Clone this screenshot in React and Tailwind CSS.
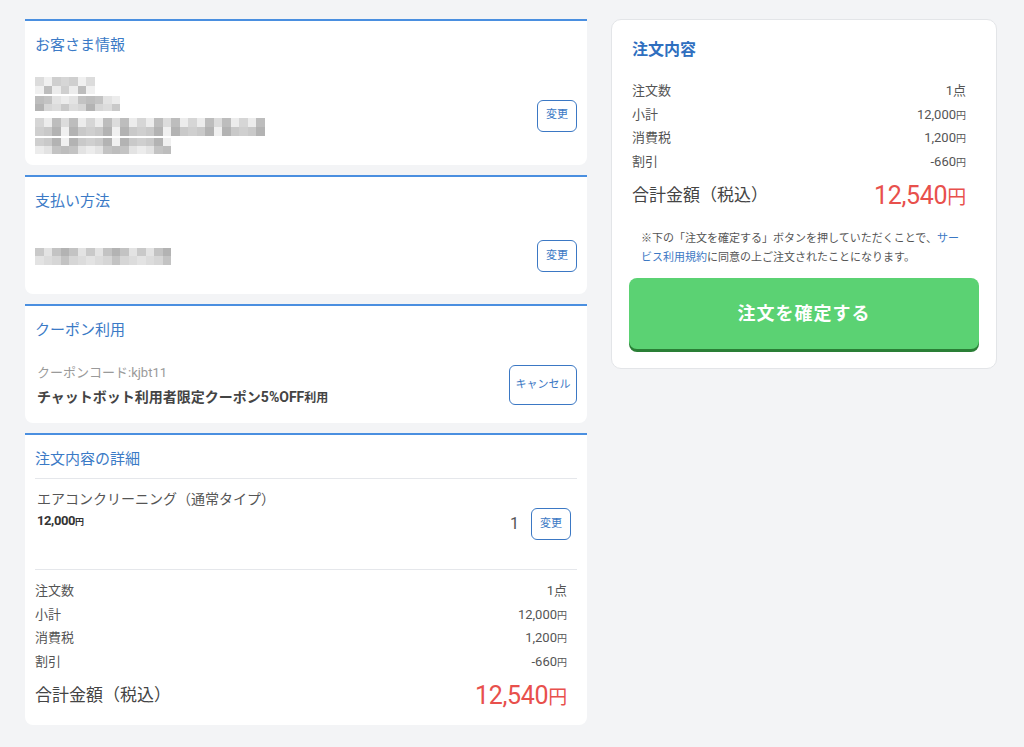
import React from 'react';

const FONT = { fontFamily: 'Roboto, "Noto Sans CJK JP", "Noto Sans", sans-serif' };

// Pixelated stand-in for the blurred personal info
const GRAYS = ['#c9c9c9', '#d6d6d6', '#bdbdbd', '#e3e3e3', '#cfcfcf', '#b3b3b3', '#dcdcdc', '#ececec', '#c3c3c3', '#f0f0f0'];
function Mosaic({ width, rows = 2, seed = 1, light = false, h = 8.5 }) {
  const cell = 8.5;
  const cols = Math.round(width / cell);
  const out = [];
  for (let r = 0; r < rows; r++) {
    const row = [];
    for (let c = 0; c < cols; c++) {
      const i = (seed * 7 + r * 13 + c * 5 + ((c * c + seed) % 3)) % GRAYS.length;
      const col = light ? GRAYS[(i + 3) % GRAYS.length] : GRAYS[i];
      row.push(<div key={c} style={{ background: col, width: cell, height: h }} />);
    }
    out.push(<div key={r} className="flex">{row}</div>);
  }
  return <div className="flex flex-col">{out}</div>;
}

function SmallBtn({ children, className = '' }) {
  return (
    <button className={`h-[32px] w-[40px] rounded-[6px] border border-[#3b78c4] bg-white text-[11px] text-[#3b78c4] ${className}`}>
      {children}
    </button>
  );
}

function Section({ title, children, className = '' }) {
  return (
    <section className={`rounded-b-[8px] border-t-2 border-[#4a8fe0] bg-white px-[10px] ${className}`}>
      <h2 className="pt-[13px] text-[15px] leading-[22px] text-[#3b7ac6]">{title}</h2>
      {children}
    </section>
  );
}

function Yen({ v, cls = 'text-[13px]', yen = 'text-[10px]' }) {
  return (
    <span className={cls}>
      {v}
      <span className={yen}>円</span>
    </span>
  );
}

function SummaryRows() {
  const rows = [
    ['注文数', <span className="text-[13px]">1点</span>],
    ['小計', <Yen v="12,000" />],
    ['消費税', <Yen v="1,200" />],
    ['割引', <Yen v="-660" />],
  ];
  return (
    <div className="flex flex-col text-[#555]">
      {rows.map(([l, r]) => (
        <div key={l} className="flex h-[23.7px] items-center justify-between">
          <span className="text-[13px]">{l}</span>
          {r}
        </div>
      ))}
    </div>
  );
}

function Total() {
  return (
    <div className="flex items-center justify-between">
      <span className="text-[17px] text-[#444]">合計金額（税込）</span>
      <span className="text-[25px] tracking-[-0.3px] text-[#e8504c]">
        12,540<span className="text-[19px]">円</span>
      </span>
    </div>
  );
}

export default function App() {
  return (
    <div className="min-h-[747px] bg-[#f3f4f6] pt-[19px]" style={FONT}>
      <div className="flex gap-[24px] pl-[25px]">
        {/* left column */}
        <div className="flex w-[562px] flex-col gap-[10px]">
          <Section title="お客さま情報" className="h-[146px]">
            <div className="mt-[21px] flex items-center justify-between">
              <div className="flex flex-col">
                <Mosaic width={60} seed={2} h={8.5} />
                <div className="mt-[2px]"><Mosaic width={85} seed={4} light h={7.5} /></div>
                <div className="mt-[7px]"><Mosaic width={230} seed={1} light h={9} /></div>
                <div className="mt-[2px]"><Mosaic width={136} seed={3} light h={8} /></div>
              </div>
              <SmallBtn>変更</SmallBtn>
            </div>
          </Section>

          <Section title="支払い方法" className="h-[119px]">
            <div className="mt-[28px] flex items-center justify-between">
              <Mosaic width={136} seed={5} light />
              <SmallBtn>変更</SmallBtn>
            </div>
          </Section>

          <Section title="クーポン利用" className="h-[119px]">
            <div className="mt-[22px] flex items-center justify-between pl-[2px]">
              <div className="flex flex-col gap-[4px]">
                <span className="text-[13px] text-[#9a9a9a]">クーポンコード:kjbt11</span>
                <span className="text-[14px] font-bold text-[#444]">
                  チャットボット利用者限定クーポン5%OFF<span className="text-[12px]">利用</span>
                </span>
              </div>
              <button className="h-[40px] w-[68px] rounded-[6px] border border-[#3b78c4] bg-white text-[11px] text-[#3b78c4]">
                キャンセル
              </button>
            </div>
          </Section>

          <Section title="注文内容の詳細" className="h-[292px]">
            <div className="mt-[8px] border-t border-[#e5e7eb]" />
            <div className="flex h-[90px] items-start justify-between pl-[2px] pr-[6px] pt-[8px]">
              <div className="flex flex-col">
                <span className="text-[14px] leading-[24px] text-[#555]">エアコンクリーニング（通常タイプ）</span>
                <span className="text-[13px] font-bold tracking-[-0.4px] text-[#333]">
                  12,000<span className="text-[9px]">円</span>
                </span>
              </div>
              <div className="mt-[21px] flex items-center gap-[12px]">
                <span className="text-[16px] text-[#555]">1</span>
                <SmallBtn>変更</SmallBtn>
              </div>
            </div>
            <div className="border-t border-[#e5e7eb]" />
            <div className="pr-[10px] pt-[9px]">
              <SummaryRows />
              <div className="mt-[3px]">
                <Total />
              </div>
            </div>
          </Section>
        </div>

        {/* right column */}
        <div className="h-[350px] w-[386px] rounded-[10px] border border-[#e3e5e8] bg-white">
          <div className="pl-[20px] pr-[30px] pt-[17px]">
            <h2 className="text-[16px] font-bold leading-[26px] text-[#2f6fbf]">注文内容</h2>
            <div className="mt-[16px]">
              <SummaryRows />
            </div>
            <div className="mt-[3px]">
              <Total />
            </div>
          </div>
          <div className="mt-[15px] px-[29px] text-[11px] leading-[19px] text-[#555]">
            <p>※下の「注文を確定する」ボタンを押していただくことで、<span className="text-[#3b78c4]">サー</span></p>
            <p><span className="text-[#3b78c4]">ビス利用規約</span>に同意の上ご注文されたことになります。</p>
          </div>
          <div className="px-[17px] pt-[11px]">
            <button className="h-[71px] w-full rounded-[8px] bg-[#5bd273] text-[18px] font-bold tracking-[1px] text-white shadow-[0_3px_0_#2a7f36]">
              注文を確定する
            </button>
          </div>
        </div>
      </div>
    </div>
  );
}
